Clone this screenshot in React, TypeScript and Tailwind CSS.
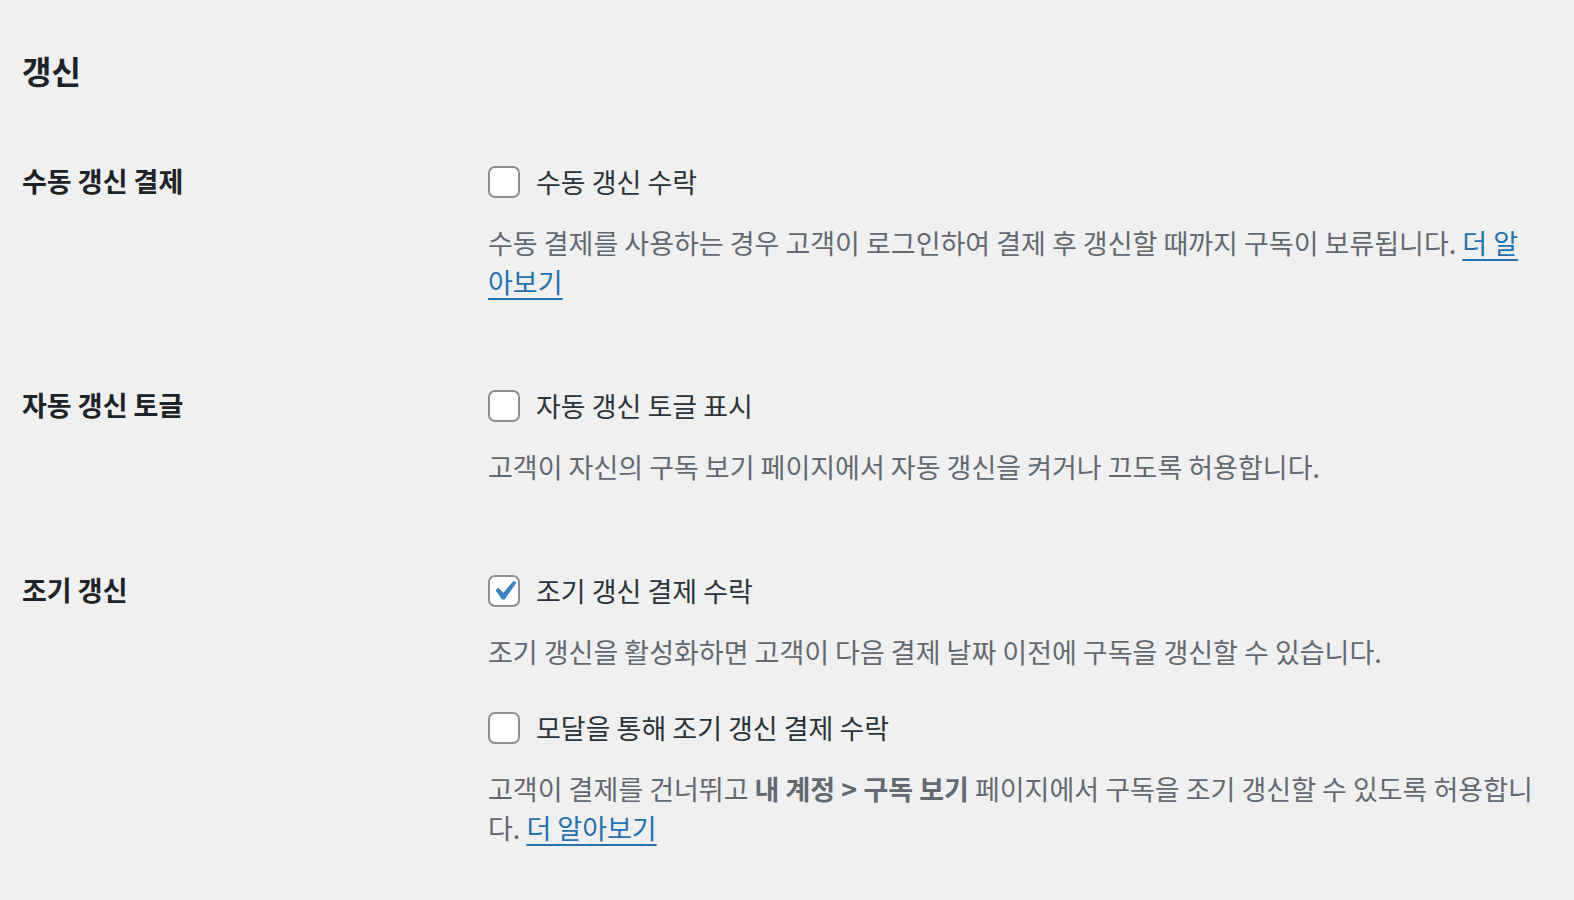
import React from "react";

const font = { fontFamily: '"Noto Sans CJK KR", "Noto Sans", sans-serif' };

const Checkbox = ({ checked, label }: { checked?: boolean; label: string }) => {
  return (
    <label className="flex items-center h-[34px] gap-[16px] text-[27px] text-[#2c3338]">
      <span className="relative w-[32px] h-[32px] rounded-[7px] border-2 border-[#8c8f94] bg-white shrink-0">
        {checked && (
          <svg
            className="absolute left-[-6px] top-[-6px]"
            width="40"
            height="40"
            viewBox="0 0 20 20"
          >
            <path
              d="M14.83 4.89l1.34.94-5.81 8.38H9.02L5.78 9.67l1.34-1.25 2.57 2.4z"
              fill="#3582c4"
            />
          </svg>
        )}
      </span>
      <span>{label}</span>
    </label>
  );
};

const Desc = ({ children }: { children: React.ReactNode }) => (
  <p className="mt-[24px] text-[27px] leading-[39px] text-[#646970]">{children}</p>
);

const Link = ({ text }: { text: string }) => (
  <a href="#" className="text-[#2271b1] underline underline-offset-[5px]">
    {text}
  </a>
);

const Row = ({ title, children }: { title: string; children: React.ReactNode }) => (
  <div className="flex pb-[47px]">
    <div className="w-[466px] shrink-0 pt-[40px]">
      <h3 className="text-[27px] leading-[34px] font-bold text-[#1d2327]">{title}</h3>
    </div>
    <div className="flex-1 pt-[41px] pr-[38px]">{children}</div>
  </div>
);

export default function App() {
  return (
    <div className="min-h-screen bg-[#f0f0f1] pl-[22px]" style={font}>
      <h2 className="pt-[50px] text-[32px] leading-[40px] font-bold text-[#1d2327]">갱신</h2>
      <div className="pt-[34px]">
        <Row title="수동 갱신 결제">
          <Checkbox label="수동 갱신 수락" />
          <Desc>
            수동 결제를 사용하는 경우 고객이 로그인하여 결제 후 갱신할 때까지 구독이 보류됩니다.{" "}
            <Link text="더 알아보기" />
          </Desc>
        </Row>
        <Row title="자동 갱신 토글">
          <Checkbox label="자동 갱신 토글 표시" />
          <Desc>고객이 자신의 구독 보기 페이지에서 자동 갱신을 켜거나 끄도록 허용합니다.</Desc>
        </Row>
        <Row title="조기 갱신">
          <Checkbox checked label="조기 갱신 결제 수락" />
          <Desc>조기 갱신을 활성화하면 고객이 다음 결제 날짜 이전에 구독을 갱신할 수 있습니다.</Desc>
          <div className="mt-[40px]">
            <Checkbox label="모달을 통해 조기 갱신 결제 수락" />
          </div>
          <Desc>
            고객이 결제를 건너뛰고 <strong className="font-bold">내 계정 &gt; 구독 보기</strong> 페이지에서
            구독을 조기 갱신할 수 있도록 허용합니다. <Link text="더 알아보기" />
          </Desc>
        </Row>
      </div>
    </div>
  );
}
